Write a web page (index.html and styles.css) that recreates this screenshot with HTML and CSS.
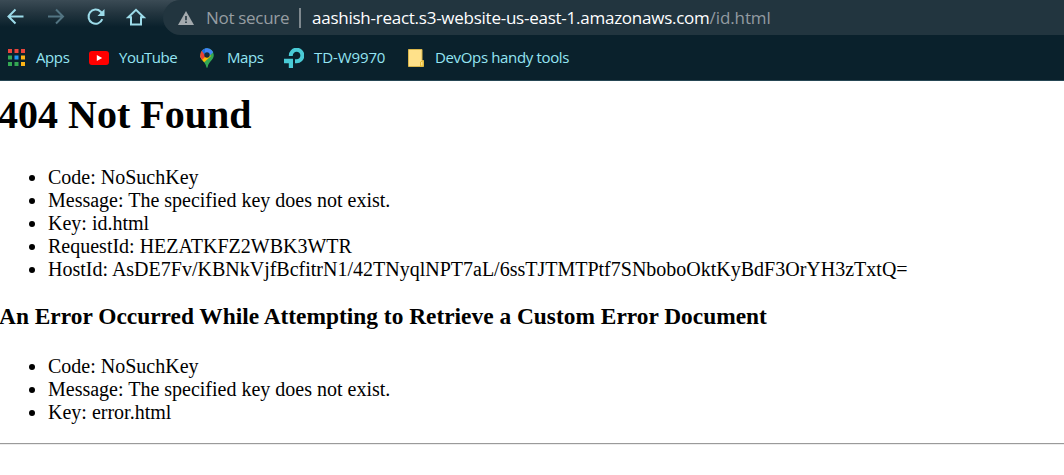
FILE: index.html
```html
<!DOCTYPE html>
<html lang="en">
<head>
<meta charset="utf-8">
<title>404 Not Found</title>
<link rel="stylesheet" href="styles.css">
</head>
<body>
<header class="browser">
  <div class="toolbar">
    <nav class="controls">
      <svg class="nav-icon" viewBox="0 0 20 20"><path d="M17.5 9.5H2.5M9.5 2.5L2.5 9.5L9.5 16.5"/></svg>
      <svg class="nav-icon disabled" viewBox="0 0 20 20"><path d="M2 9.5H17M10 2.5L17 9.5L10 16.5"/></svg>
      <svg class="nav-icon" viewBox="0 0 20 20"><path d="M16.3 12.2A7.1 7.1 0 1 1 14.7 4.7L16.4 6.5"/><path class="solid" d="M18.5 2V9H11.5Z"/></svg>
      <svg class="nav-icon" viewBox="0 0 20 20"><path d="M2.3 10.3L10 2.9L17.7 10.3H15V17.5H5V10.3Z"/></svg>
    </nav>
    <div class="address">
      <svg class="warning" viewBox="0 0 16 14"><path fill="#a4aaae" d="M8 0L16 14H0Z"/><path fill="#22353f" d="M7.2 5H8.8V9.2H7.2ZM7.2 10.4H8.8V12H7.2Z"/></svg>
      <span class="security">Not secure</span>
      <span class="divider"></span>
      <span class="url"><span class="host">aashish-react.s3-website-us-east-1.amazonaws.com</span><span class="path">/id.html</span></span>
    </div>
  </div>
  <nav class="bookmarks">
    <a class="bookmark apps"><svg class="apps-icon" viewBox="0 0 17 17"><path fill="#e8453c" d="M0 0h4v4H0zM6.5 0h4v4h-4zM13 0h4v4h-4z"/><path fill="#34a853" d="M0 6.5h4v4H0zM0 13h4v4H0zM6.5 13h4v4h-4z"/><path fill="#2196f3" d="M6.5 6.5h4v4h-4z"/><path fill="#fbb315" d="M13 6.5h4v4h-4zM13 13h4v4h-4z"/></svg><span>Apps</span></a>
    <a class="bookmark youtube"><svg class="youtube-icon" viewBox="0 0 20 14"><rect width="20" height="14" rx="3" fill="#f00"/><path fill="#fff" d="M7.8 4L13.2 7L7.8 10Z"/></svg><span>YouTube</span></a>
    <a class="bookmark maps"><svg class="maps-icon" viewBox="0 0 14 20">
      <defs><clipPath id="pin"><path d="M7 0.3A6.8 6.8 0 0 0 0.2 7.1C0.2 12 5.3 13.4 6.4 19.2Q7 20.4 7.6 19.2C8.7 13.4 13.8 12 13.8 7.1A6.8 6.8 0 0 0 7 .3Z"/></clipPath></defs>
      <g clip-path="url(#pin)"><path fill="#34a853" d="M0 0H14V20H0Z"/><path fill="#fbbc04" d="M0 8L6 4L11 8L2.8 15.5L0 12Z"/><path fill="#ea4335" d="M0 0H3L7 7L2 12L0 10Z"/><path fill="#1a73e8" d="M1.5 2.5L5 0H8L4.8 7Z"/><path fill="#4285f4" d="M5 0H11L13.5 4L8 9L5 5Z"/></g><circle cx="7" cy="7" r="2.7" fill="#152b3b"/></svg><span>Maps</span></a>
    <a class="bookmark router"><svg class="router-icon" viewBox="0 0 20 20"><path fill="none" stroke="#4acbd6" stroke-width="4" d="M6.8 8V7.7A5.8 5.8 0 1 1 12.5 13.3H11"/><path fill="#4acbd6" d="M0 10.8H9V20H4.8V15.2H0Z"/></svg><span>TD-W9970</span></a>
    <a class="bookmark folder"><svg class="folder-icon" viewBox="0 0 16 18"><path fill="#ffe18a" stroke="#d9b64b" d="M.5 .5H14V11.5H15.5V17.5H.5Z"/><path fill="#ffe18a" stroke="#e8bc35" d="M12.5 17V13L15 11.7V17Z"/></svg><span>DevOps handy tools</span></a>
  </nav>
</header>
<main class="document">
  <h1>404 Not Found</h1>
  <ul>
    <li>Code: NoSuchKey</li>
    <li>Message: The specified key does not exist.</li>
    <li>Key: id.html</li>
    <li>RequestId: HEZATKFZ2WBK3WTR</li>
    <li>HostId: AsDE7Fv/KBNkVjfBcfitrN1/42TNyqlNPT7aL/6ssTJTMTPtf7SNboboOktKyBdF3OrYH3zTxtQ=</li>
  </ul>
  <h3>An Error Occurred While Attempting to Retrieve a Custom Error Document</h3>
  <ul>
    <li>Code: NoSuchKey</li>
    <li>Message: The specified key does not exist.</li>
    <li>Key: error.html</li>
  </ul>
  <hr>
</main>
</body>
</html>
```
FILE: styles.css
```css
* { box-sizing: border-box; }
body { margin: 0; background: #fff; overflow: hidden; }
svg { display: block; flex: none; }
.browser {
  height: 81px;
  background: linear-gradient(#3b4b55 0, #23353f 13px, #0a212c 27px);
  border-bottom: 1px solid #264653;
  font-family: "Open Sans", "Noto Sans", sans-serif;
  white-space: nowrap;
}
.toolbar { display: flex; height: 35px; }
.controls { display: flex; gap: 20px; width: 163px; padding: 7px 0 0 6px; }
.nav-icon { width: 20px; height: 20px; fill: none; stroke: #9cdbe9; stroke-width: 2; }
.nav-icon .solid { fill: #9cdbe9; stroke: none; }
.disabled { stroke: #527482; }
.address {
  flex: 1;
  display: flex;
  align-items: center;
  height: 35px;
  padding-left: 15px;
  border-radius: 18px 0 0 18px;
  background: #22353f;
  font-size: 17px;
}
.warning { width: 16px; height: 14px; }
.security { width: 83px; margin-left: 12px; color: #969da2; letter-spacing: -0.3px; }
.divider { width: 2px; height: 20px; margin: 0 11px 0 10px; background: #7f898f; }
.host { color: #fff; letter-spacing: -0.25px; }
.path { color: #929ba1; letter-spacing: -0.1px; }
.bookmarks { display: flex; height: 45px; font-size: 15px; color: #94e5f3; }
.bookmark { display: flex; align-items: center; height: 45px; }
.bookmark span { margin-top: -1px; }
.apps { width: 81px; padding-left: 8px; gap: 11px; letter-spacing: -0.4px; }
.youtube { width: 110px; padding-left: 8px; gap: 10px; letter-spacing: -0.5px; }
.maps { width: 93px; padding-left: 9px; gap: 13px; letter-spacing: -0.4px; }
.router { gap: 10px; width: 124px; letter-spacing: -0.1px; }
.folder { gap: 11px; letter-spacing: -0.35px; }
.apps-icon { width: 17px; height: 17px; }
.youtube-icon { width: 20px; height: 14px; }
.maps-icon { width: 14px; height: 20px; }
.router-icon { width: 20px; height: 20px; }
.folder-icon { width: 16px; height: 18px; }
.document { font: 20px/23px "Liberation Serif", "Times New Roman", serif; color: #000; }
h1 { margin: 11px 0 28px -2px; font-size: 40px; line-height: 46px; }
h3 { margin: 22px 0 25px -1px; font-size: 23.4px; line-height: 27px; }
ul { margin: 0; padding-left: 48px; }
hr { height: 2px; margin: 19px 0 0; border: 0; border-top: 1px solid #9a9a9a; background: #ededed; }
```
